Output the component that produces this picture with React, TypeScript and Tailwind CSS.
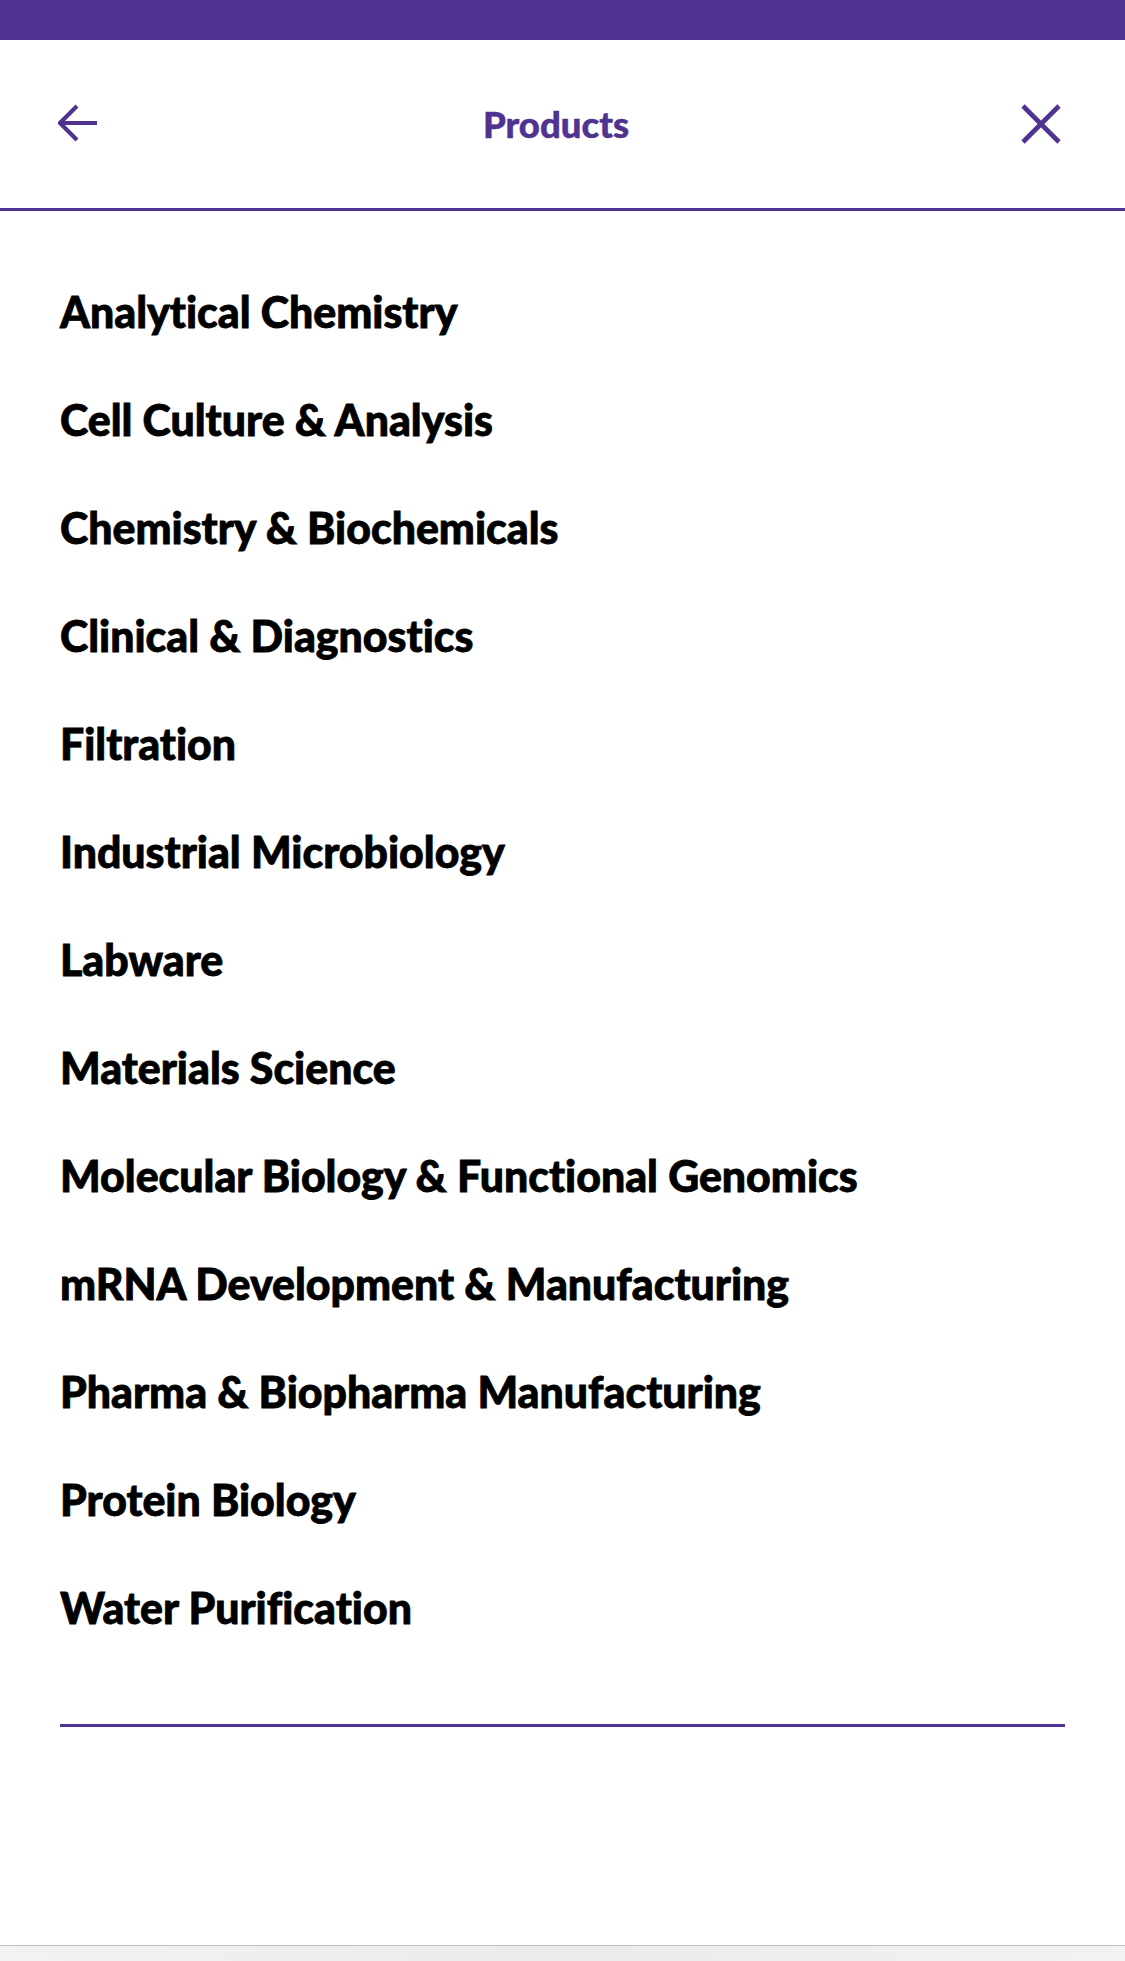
import React from "react";

const items = [
  "Analytical Chemistry",
  "Cell Culture & Analysis",
  "Chemistry & Biochemicals",
  "Clinical & Diagnostics",
  "Filtration",
  "Industrial Microbiology",
  "Labware",
  "Materials Science",
  "Molecular Biology & Functional Genomics",
  "mRNA Development & Manufacturing",
  "Pharma & Biopharma Manufacturing",
  "Protein Biology",
  "Water Purification",
];

export default function App() {
  return (
    <div
      className="w-[1125px] h-[1961px] bg-white flex flex-col overflow-hidden [font-variant-ligatures:none] [font-feature-settings:'liga'_0,'calt'_0,'dlig'_0]"
      style={{ fontFamily: "Lato, 'Noto Sans', sans-serif" }}
    >
      <div className="h-[40px] bg-[#503291] shrink-0" />
      <header className="h-[168px] shrink-0 flex items-center justify-between pl-[58px] pr-[64px] border-b-[3px] border-[#503291] box-content">
        <svg width="40" height="40" viewBox="0 0 40 40" className="mt-[-2px]">
          <path
            d="M39 20 H3 M19 3 L2 20 L19 37"
            fill="none"
            stroke="#503291"
            strokeWidth="4.2"
          />
        </svg>
        <h1 className="text-[36.5px] font-black text-[#503291] leading-none mr-[7px] [-webkit-text-stroke:0.5px_#503291]">
          Products
        </h1>
        <svg width="40" height="40" viewBox="0 0 40 40" className="mt-[-1px]">
          <path
            d="M2 2 L38 38 M38 2 L2 38"
            fill="none"
            stroke="#503291"
            strokeWidth="4.6"
          />
        </svg>
      </header>
      <nav className="pt-[47px] px-[60px]">
        <ul className="flex flex-col">
          {items.map((t) => (
            <li
              key={t}
              className="text-[42.8px] font-black text-black leading-[108px] [-webkit-text-stroke:0.8px_black]"
            >
              {t}
            </li>
          ))}
        </ul>
        <div className="mt-[62px] h-[3px] bg-[#503291]" />
      </nav>
      <div className="flex-1" />
      <div className="h-[16px] shrink-0 border-t border-[#bdbdbd] bg-gradient-to-r from-[#f2f2f2] via-[#ebebeb] to-[#f2f2f2]" />
    </div>
  );
}
